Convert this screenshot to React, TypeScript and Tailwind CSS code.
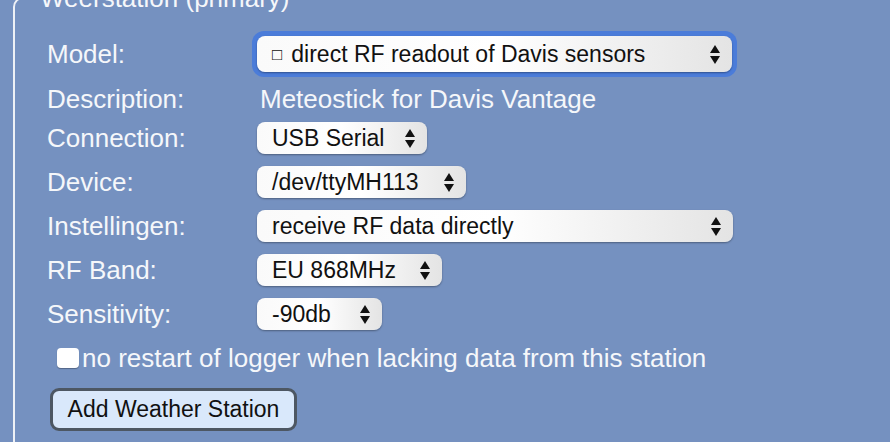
import type { ReactNode } from "react";

const Arrows = () => (
  <svg width="10" height="19" viewBox="0 0 10 19" className="shrink-0">
    <path d="M5 0 L10 8 L0 8 Z" fill="#111" />
    <path d="M0 11 L10 11 L5 19 Z" fill="#111" />
  </svg>
);

const Select = ({
  value,
  width,
  focused = false,
  mark = false,
}: {
  value: string;
  width: string;
  focused?: boolean;
  mark?: boolean;
}) => (
  <div
    className={
      focused
        ? "rounded-[12px] bg-[#4b7cd9] p-[5px] -ml-[5px] -my-[2px]"
        : ""
    }
  >
    <div
      className={`flex ${focused ? "h-[36px]" : "h-[32px]"} ${width} items-center justify-between rounded-[8px] bg-gradient-to-r from-[#fafafa] via-white to-[#e4e4e4] pl-[15px] pr-[12px] text-[23px] leading-none text-[#111] shadow-[0_1px_2px_rgba(0,0,0,0.35)]`}
    >
      <span className="flex items-center whitespace-nowrap">
        {mark && <span className="mr-[9px] text-[17px]">□</span>}
        {value}
      </span>
      <Arrows />
    </div>
  </div>
);

const Row = ({
  label,
  children,
  height = "h-[44px]",
}: {
  label: string;
  children: ReactNode;
  height?: string;
}) => (
  <div className={`grid grid-cols-[219px_1fr] items-center ${height}`}>
    <span className="pl-[9px]">{label}</span>
    <div className="flex">{children}</div>
  </div>
);

export default function App() {
  return (
    <div className="h-[442px] w-full overflow-hidden bg-[#7591c0] font-['Liberation_Sans',Arial,sans-serif] text-[26px] leading-[30px] text-[#f5f7fa]">
      <fieldset className="ml-[13px] -mt-[17px] w-[920px] rounded-[10px] border-2 border-[#eef1f6] pb-10 pl-[23px] pt-[19px]">
        <legend className="px-[2px] text-[26px] leading-[30px]">Weerstation (primary)</legend>

        <Row label="Model:">
          <Select value="direct RF readout of Davis sensors" width="w-[475px]" focused mark />
        </Row>
        <Row label="Description:" height="h-[40px] pt-[5px]">
          <span className="pl-[3px] whitespace-nowrap">Meteostick for Davis Vantage</span>
        </Row>
        <Row label="Connection:">
          <Select value="USB Serial" width="w-[170px]" />
        </Row>
        <Row label="Device:">
          <Select value="/dev/ttyMH113" width="w-[209px]" />
        </Row>
        <Row label="Instellingen:">
          <Select value="receive RF data directly" width="w-[476px]" />
        </Row>
        <Row label="RF Band:">
          <Select value="EU 868MHz" width="w-[185px]" />
        </Row>
        <Row label="Sensitivity:">
          <Select value="-90db" width="w-[125px]" />
        </Row>

        <label className="flex h-[44px] items-center gap-[3px] pl-[19px]">
          <span className="h-[20px] w-[22px] shrink-0 rounded-[4px] bg-white shadow-[0_1px_1px_rgba(0,0,0,0.3)]" />
          <span className="whitespace-nowrap">no restart of logger when lacking data from this station</span>
        </label>

        <div className="mt-2 pl-[12px]">
          <button className="flex h-[43px] w-[247px] items-center justify-center rounded-[9px] border-[3px] border-[#4d5763] bg-[#d9e8fb] text-[23px] leading-none text-[#111]">
            Add Weather Station
          </button>
        </div>
      </fieldset>
    </div>
  );
}
